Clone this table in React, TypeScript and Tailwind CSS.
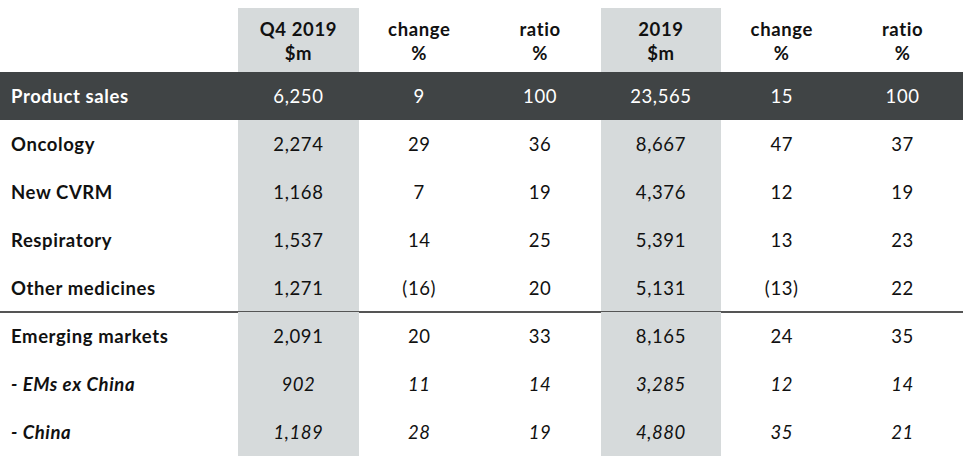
import React from "react";

type Row = {
  label: string;
  vals: string[];
  kind: "dark" | "normal" | "italic";
  borderBottom?: boolean;
};

const rows: Row[] = [
  { label: "Product sales", vals: ["6,250", "9", "100", "23,565", "15", "100"], kind: "dark" },
  { label: "Oncology", vals: ["2,274", "29", "36", "8,667", "47", "37"], kind: "normal" },
  { label: "New CVRM", vals: ["1,168", "7", "19", "4,376", "12", "19"], kind: "normal" },
  { label: "Respiratory", vals: ["1,537", "14", "25", "5,391", "13", "23"], kind: "normal" },
  { label: "Other medicines", vals: ["1,271", "(16)", "20", "5,131", "(13)", "22"], kind: "normal", borderBottom: true },
  { label: "Emerging markets", vals: ["2,091", "20", "33", "8,165", "24", "35"], kind: "normal" },
  { label: "- EMs ex China", vals: ["902", "11", "14", "3,285", "12", "14"], kind: "italic" },
  { label: "- China", vals: ["1,189", "28", "19", "4,880", "35", "21"], kind: "italic" },
];

const headers = [
  ["Q4 2019", "$m"],
  ["change", "%"],
  ["ratio", "%"],
  ["2019", "$m"],
  ["change", "%"],
  ["ratio", "%"],
];

const shaded = [true, false, false, true, false, false];

export default function App() {
  return (
    <div
      className="w-[963px] h-[456px] bg-white overflow-hidden text-[18.5px] tracking-[0.6px] text-[#111]"
      style={{ fontFamily: "Lato, 'Open Sans', sans-serif" }}
    >
      <div className="grid grid-cols-[238px_repeat(6,1fr)] h-[72px]">
        <div />
        {headers.map((h, i) => (
          <div
            key={i}
            className={`mt-2 h-[64px] pt-[2px] flex flex-col items-center justify-center font-bold leading-[24px] ${
              shaded[i] ? "bg-[#d6dadb]" : ""
            }`}
          >
            <span>{h[0]}</span>
            <span>{h[1]}</span>
          </div>
        ))}
      </div>
      {rows.map((r, ri) => {
        const dark = r.kind === "dark";
        const italic = r.kind === "italic";
        return (
          <div
            key={ri}
            className={`grid grid-cols-[238px_repeat(6,1fr)] h-[48px] relative ${
              dark ? "bg-[#404445] text-white" : ""
            }`}
          >
            <div
              className={`flex items-center pl-[11px] pt-[2px] font-bold ${italic ? "italic" : ""}`}
            >
              {r.label}
            </div>
            {r.vals.map((v, i) => (
              <div
                key={i}
                className={`flex items-center justify-center pt-[2px] ${italic ? "italic" : ""} ${
                  shaded[i] && !dark ? "bg-[#d6dadb]" : ""
                }`}
              >
                {v}
              </div>
            ))}
            {r.borderBottom && (
              <div className="absolute left-0 right-0 bottom-[-1px] h-[2px] bg-[#555555]" />
            )}
          </div>
        );
      })}
    </div>
  );
}
